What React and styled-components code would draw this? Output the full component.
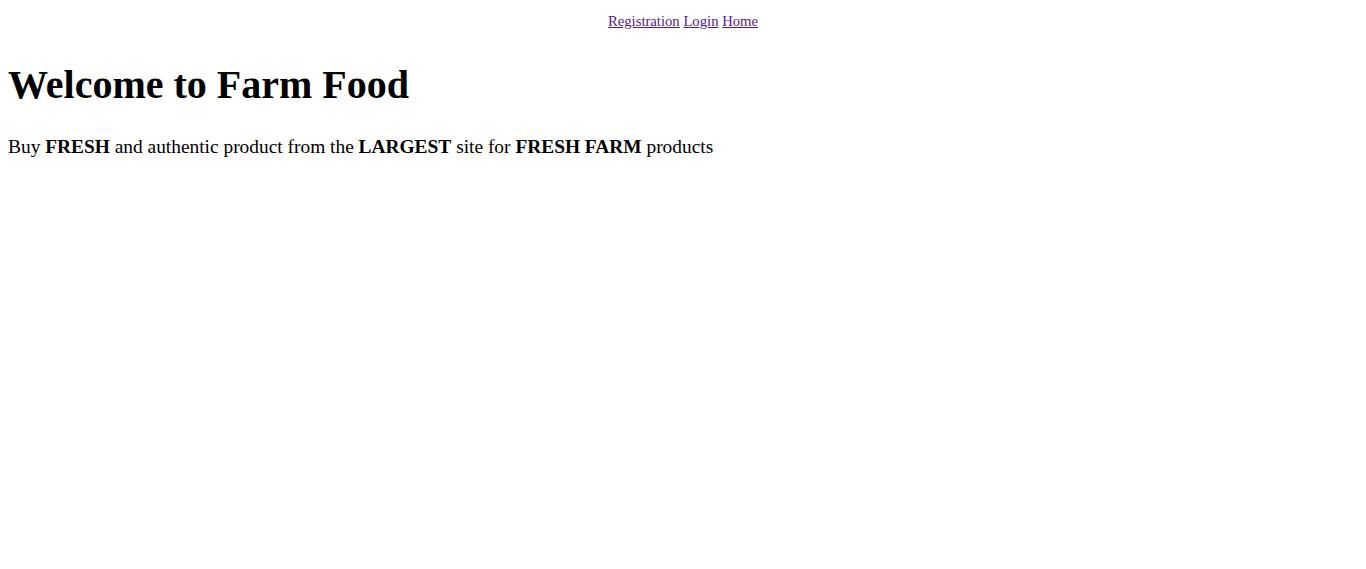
import React from "react"
import styled, { createGlobalStyle } from "styled-components"

const GlobalStyle = createGlobalStyle`
  body {
    margin: 8px;
    background: #fff;
    color: #000;
    font-family: "Liberation Serif", "Times New Roman", serif;
  }
`

function App() {
  return (
    <>
      <GlobalStyle />
      <Nav>
        <NavLink href="#registration">Registration</NavLink>{" "}
        <NavLink href="#login">Login</NavLink>{" "}
        <NavLink href="#home">Home</NavLink>
      </Nav>
      <Title>Welcome to Farm Food</Title>
      <Lead>
        Buy <b>FRESH</b> and authentic product from the <b>LARGEST</b> site for{" "}
        <b>FRESH FARM</b> products
      </Lead>
    </>
  )
}

export default App

const Nav = styled.nav`
  text-align: center;
  font-size: 14.7px;
  line-height: 17px;
  padding-top: 5px;
`

const NavLink = styled.a`
  color: #551a8b;
  text-decoration: underline;
`

const Title = styled.h1`
  font-size: 40px;
  font-weight: bold;
  margin: 31px 0 0;
`

const Lead = styled.p`
  font-size: 19.4px;
  margin: 28px 0 0;
`
